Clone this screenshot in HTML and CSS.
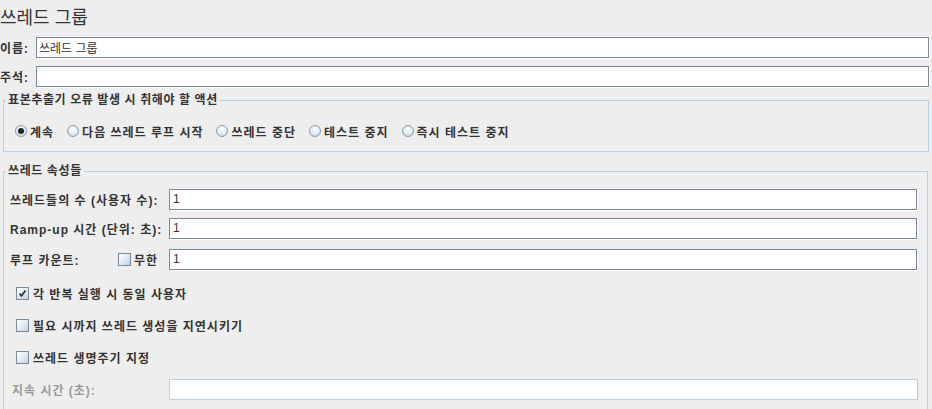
FILE: index.html
```html
<!DOCTYPE html>
<html lang="ko">
<head>
<meta charset="utf-8">
<title>쓰레드 그룹</title>
<link rel="stylesheet" href="styles.css">
</head>
<body>
<div class="title">쓰레드 그룹</div>

<div class="row">
  <label class="lbl short">이름:</label>
  <div class="field">쓰레드 그룹</div>
</div>
<div class="row row2">
  <label class="lbl short">주석:</label>
  <div class="field"></div>
</div>

<fieldset class="group g1">
  <legend class="legend">표본추출기 오류 발생 시 취해야 할 액션</legend>
  <div class="radios">
    <span class="opt"><span class="radio on"></span><span class="lbl">계속</span></span>
    <span class="opt"><span class="radio"></span><span class="lbl">다음 쓰레드 루프 시작</span></span>
    <span class="opt"><span class="radio"></span><span class="lbl">쓰레드 중단</span></span>
    <span class="opt"><span class="radio"></span><span class="lbl">테스트 중지</span></span>
    <span class="opt"><span class="radio"></span><span class="lbl">즉시 테스트 중지</span></span>
  </div>
</fieldset>

<fieldset class="group g2">
  <legend class="legend">쓰레드 속성들</legend>
  <div class="props">
    <div class="prow">
      <span class="lbl">쓰레드들의 수 (사용자 수):</span>
      <div class="field num">1</div>
    </div>
    <div class="prow">
      <span class="lbl">Ramp-up 시간 (단위: 초):</span>
      <div class="field num">1</div>
    </div>
    <div class="prow prow3">
      <span class="lbl lcell"><span>루프 카운트:</span><span class="inf"><span class="check"></span><span>무한</span></span></span>
      <div class="field num">1</div>
    </div>
    <div class="crow crow1"><span class="check on"><svg width="11" height="11" viewBox="0 0 11 11"><path d="M2.5 5.5 L4.5 8 L8.5 2.5" fill="none" stroke="#222" stroke-width="1.6"/></svg></span><span class="lbl">각 반복 실행 시 동일 사용자</span></div>
    <div class="crow"><span class="check"></span><span class="lbl">필요 시까지 쓰레드 생성을 지연시키기</span></div>
    <div class="crow"><span class="check"></span><span class="lbl">쓰레드 생명주기 지정</span></div>
    <div class="prow prow-dis">
      <span class="lbl dis">지속 시간 (초):</span>
      <div class="field disfield"></div>
    </div>
  </div>
</fieldset>
</body>
</html>
```
FILE: styles.css
```css
html, body {
  margin: 0;
  padding: 0;
  background: #eeeeee;
  color: #333333;
  font-family: "Liberation Sans", "Noto Sans CJK KR", sans-serif;
  font-size: 12px;
  overflow: hidden;
}

.title {
  height: 32px;
  line-height: 32px;
  font-size: 18px;
  font-family: "Noto Sans CJK KR", sans-serif;
  padding-left: 0;
}

.lbl {
  font-weight: bold;
  letter-spacing: 1px;
  white-space: nowrap;
}

.row {
  display: flex;
  align-items: center;
  height: 21px;
  margin-top: 5px;
  padding-right: 3px;
}
.row2 { margin-top: 8px; }

.short { width: 36px; flex: none; }

.field {
  flex: 1;
  height: 21px;
  box-sizing: border-box;
  background: #fff;
  border: 1px solid #7a8a99;
  box-shadow: 1px 1px 0 #ffffff;
  padding-left: 2px;
  line-height: 19px;
  font-family: "Noto Sans CJK KR", sans-serif;
  font-size: 12px;
  color: #333;
}
.num { font-family: "Liberation Sans", sans-serif; padding-left: 3px; }

.group {
  border: 1px solid #b8cfe5;
  margin: 0 4px 0 3px;
  padding: 0;
  min-width: 0;
}
.g1 { margin-top: 6px; padding: 14px 0 10px 0; margin-right: 3px; }
.g2 { margin-top: 12px; padding: 11px 10px 20px 0; margin-right: 4px; }

.legend {
  font-weight: bold;
  letter-spacing: 0.6px;
  line-height: 14px;
  padding: 0 2px;
  margin-left: 2px;
  color: #333;
}

.radios {
  display: flex;
  align-items: center;
  height: 20px;
  gap: 13px;
  padding-left: 11px;
}
.opt {
  display: flex;
  align-items: center;
  gap: 3px;
}
.radio {
  width: 10px;
  height: 10px;
  border-radius: 50%;
  border: 1px solid #8a9aaa;
  background: radial-gradient(circle at 50% 30%, #ffffff 0%, #dde8f3 60%, #b8cfe5 100%);
  display: flex;
  align-items: center;
  justify-content: center;
}
.radio.on::after {
  content: "";
  width: 6px;
  height: 6px;
  border-radius: 50%;
  background: #222;
}

.props { display: flex; flex-direction: column; padding-left: 6px; }

.prow {
  display: grid;
  grid-template-columns: 159px 1fr;
  align-items: center;
  height: 21px;
  margin-top: 8px;
}
.prow:first-child { margin-top: 0; }
.prow3 { margin-top: 10px; }

.lcell {
  display: flex;
  align-items: center;
  justify-content: space-between;
  padding-right: 11px;
}
.inf { display: flex; align-items: center; gap: 3px; }

.check {
  width: 11px;
  height: 11px;
  border: 1px solid #7a8a99;
  background: linear-gradient(135deg, #ffffff 0%, #dce7f2 60%, #b8cfe5 100%);
  display: inline-flex;
  align-items: center;
  justify-content: center;
  flex: none;
}

.crow {
  display: flex;
  align-items: center;
  gap: 4px;
  height: 20px;
  margin-top: 12px;
  padding-left: 6px;
}
.crow1 { margin-top: 13px; }

.prow-dis { margin-top: 12px; }
.dis { color: #999999; padding-left: 2px; }
.disfield {
  border-color: #b8cfe5;
  box-shadow: none;
  margin-right: -1px;
}
```
